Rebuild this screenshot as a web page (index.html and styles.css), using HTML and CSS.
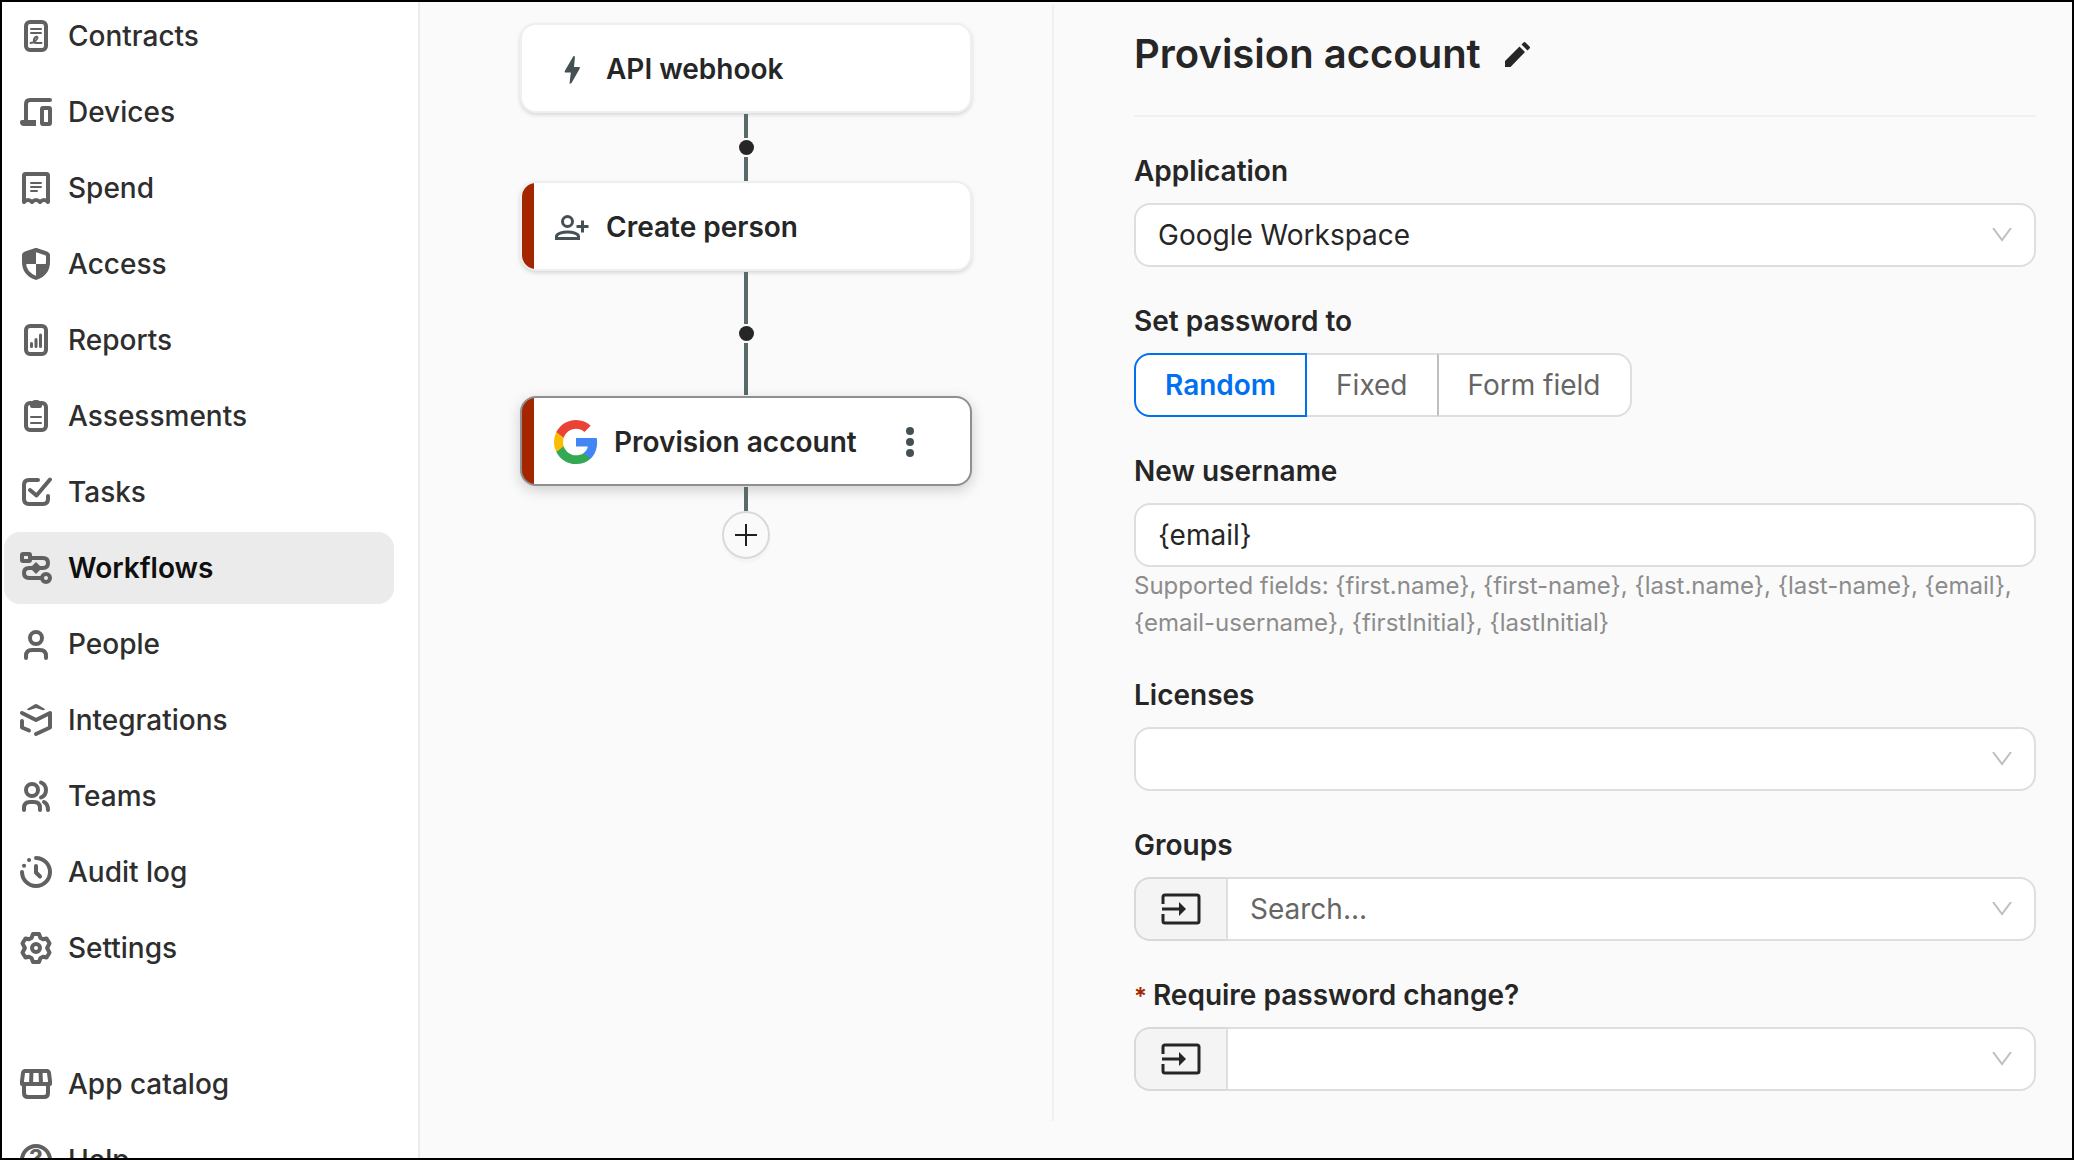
FILE: index.html
```
<!DOCTYPE html>
<html lang="en">
<head>
    <meta charset="UTF-8">
    <meta name="viewport" content="width=device-width, initial-scale=1.0">
    <title>Workflows</title>
    <link rel="stylesheet" href="styles.css">
</head>
<body>
    <div class="app">
        <nav class="sidebar">
            <a class="nav-item" href="#contracts">
                <svg class="nav-icon" viewBox="0 0 36 36"><rect x="8" y="4" width="20" height="28" rx="4"/><path stroke-width="2" d="M13 11h10M13 15h10M12.500 25c3 0 7.500-3.500 7-5.500-.5-1.500-3-.5-3.500 2s.5 3.500 2 3.500h5.500"/></svg>
                <span>Contracts</span>
            </a>
            <a class="nav-item" href="#devices">
                <svg class="nav-icon" viewBox="0 0 36 36"><path d="M32 6H12q-4 0-4 4v18"/><path fill="currentColor" stroke="none" d="M4 26h14v6H6q-4 0-4-4 0-2 2-2z"/><rect x="24" y="14" width="8" height="16" rx="1"/></svg>
                <span>Devices</span>
            </a>
            <a class="nav-item" href="#spend">
                <svg class="nav-icon" viewBox="0 0 36 36"><path d="M6 32V5.500Q6 4 7.500 4h21Q30 4 30 5.500V32q-2-2-4-2t-4 2q-2-2-4-2t-4 2q-2-2-4-2t-4 2z"/><path stroke-width="2" d="M13 13h10M13 17h10M13 21h6"/></svg>
                <span>Spend</span>
            </a>
            <a class="nav-item" href="#access">
                <svg class="nav-icon" viewBox="0 0 36 36"><path d="M18 4l9 3q3 1 3 2v7c0 8-4 13-12 16C10 29 6 24 6 16V9q0-1 3-2z"/><path fill="currentColor" stroke="none" d="M18 4v14H6V8zM18 18h12q-1 10-12 14z"/></svg>
                <span>Access</span>
            </a>
            <a class="nav-item" href="#reports">
                <svg class="nav-icon" viewBox="0 0 36 36"><rect x="8" y="4" width="20" height="28" rx="4"/><path stroke-width="3" d="M13.500 21.500v3M18 17.500v7M22.500 13v11.500"/></svg>
                <span>Reports</span>
            </a>
            <a class="nav-item" href="#assessments">
                <svg class="nav-icon" viewBox="0 0 36 36"><rect x="8" y="5" width="20" height="27" rx="4"/><path stroke-width="2" d="M13 19h10M13 25h10"/><path fill="currentColor" stroke="none" d="M12 5h2q0-3 3-3h2q3 0 3 3h2v3q0 2-2 2h-8q-2 0-2-2z"/></svg>
                <span>Assessments</span>
            </a>
            <a class="nav-item" href="#tasks">
                <svg class="nav-icon" viewBox="0 0 36 36"><path d="M20 6H11q-5 0-5 5v14q0 5 5 5h14q5 0 5-5v-3"/><path d="M12 16l6.500 5.500L32 5.500"/></svg>
                <span>Tasks</span>
            </a>
            <a class="nav-item active" href="#workflows">
                <svg class="nav-icon" viewBox="0 0 36 36"><rect x="4" y="4" width="8" height="7" rx="1"/><path d="M12 8h13q5 0 5 5t-5 5H11q-5 0-5 5t5 5h12"/><circle cx="28" cy="28" r="4"/><path fill="currentColor" stroke="none" d="M18 12l6 6-6 6-6-6z"/></svg>
                <span>Workflows</span>
            </a>
            <a class="nav-item" href="#people">
                <svg class="nav-icon" viewBox="0 0 36 36"><circle cx="18" cy="12" r="6"/><path d="M8 32v-2q0-6 6-6h8q6 0 6 6v2"/></svg>
                <span>People</span>
            </a>
            <a class="nav-item" href="#integrations">
                <svg class="nav-icon" viewBox="0 0 36 36"><path d="M4 11l14 7 14-7v14.500L18 32M4 19v6.500l7 3"/><path fill="currentColor" stroke="none" d="M9 7l7.500-4.500q1.500-1 3 0L27 7q0 1.500-3 1l-6-2-6 2q-3 .5-3-1z"/></svg>
                <span>Integrations</span>
            </a>
            <a class="nav-item" href="#teams">
                <svg class="nav-icon" viewBox="0 0 36 36"><circle cx="14" cy="12" r="6"/><path d="M6 32v-2q0-6 6-6h4q6 0 6 6v2M23 4.500q5 2 5 7.500t-5 7.500M26 24q4 2 4 8"/></svg>
                <span>Teams</span>
            </a>
            <a class="nav-item" href="#audit-log">
                <svg class="nav-icon" viewBox="0 0 36 36"><path d="M18 4a14 14 0 1 1-14 14M11 6h.1M6 11.800h.1M18 12v6.500l4 4"/></svg>
                <span>Audit log</span>
            </a>
            <a class="nav-item" href="#settings">
                <svg class="nav-icon" viewBox="0 0 36 36"><path d="M15 4h6l1.500 4 2.500 1.200 3.500-.7 3 4.800-2.400 4.700 2.400 4.700-3 4.800-3.500-.7-2.500 1.200-1.500 4h-6l-1.500-4L11 26.800l-3.500.7-3-4.800L6.900 18l-2.400-4.700 3-4.800 3.500.7L13.500 8z"/><circle cx="18" cy="18" r="4"/></svg>
                <span>Settings</span>
            </a>
            <div class="nav-bottom">
                <a class="nav-item" href="#app-catalog">
                    <svg class="nav-icon" viewBox="0 0 36 36"><path d="M7 5h22q1.500 0 2 2l1 8v3H4v-3l1-8q.5-2 2-2zM13.500 5l-.5 13M22.500 5l.5 13M6 18v9q0 4 4 4h16q4 0 4-4v-9"/></svg>
                    <span>App catalog</span>
                </a>
                <a class="nav-item" href="#help">
                    <svg class="nav-icon" viewBox="0 0 36 36"><circle cx="18" cy="18" r="14"/><text x="18" y="25" class="help-mark">?</text></svg>
                    <span>Help</span>
                </a>
            </div>
        </nav>

        <main class="canvas">
            <div class="step">
                <svg class="step-icon" viewBox="0 0 36 36"><path d="M19.500 5l1.500.500L20 16h5.500q.8.500 0 2L17.500 32l-2 1L16.800 21.500H11q-.8-.5 0-2z"/></svg>
                <span>API webhook</span>
            </div>
            <div class="connector">
                <span class="line"></span>
                <span class="dot"></span>
                <span class="line"></span>
            </div>
            <div class="step has-error">
                <svg class="step-icon outline" viewBox="0 0 36 36"><circle cx="13.500" cy="12.500" r="5"/><path d="M2.500 29.500v-2c0-3 6-4.500 11-4.500s11 1.500 11 4.500v2zM22.500 17.500h12M28.500 11.500v12"/></svg>
                <span>Create person</span>
            </div>
            <div class="connector long">
                <span class="line"></span>
                <span class="dot"></span>
                <span class="line"></span>
            </div>
            <div class="step has-error selected">
                <svg class="logo" viewBox="2 2 44 44">
                    <path fill="#4285f4" d="M45.120 24.500c0-1.560-.14-3.060-.4-4.500H24v8.510h11.840c-.51 2.750-2.060 5.080-4.390 6.640v5.520h7.110c4.160-3.830 6.560-9.470 6.560-16.170z"/>
                    <path fill="#34a853" d="M24 46c5.940 0 10.920-1.970 14.560-5.330l-7.110-5.520c-1.970 1.320-4.490 2.100-7.450 2.100-5.730 0-10.580-3.870-12.310-9.070H4.340v5.700C7.960 41.070 15.400 46 24 46z"/>
                    <path fill="#fbbc05" d="M11.690 28.180C11.250 26.860 11 25.450 11 24s.25-2.860.69-4.180v-5.700H4.340A21.990 21.990 0 0 0 2 24c0 3.550.85 6.910 2.340 9.880l7.350-5.700z"/>
                    <path fill="#ea4335" d="M24 10.750c3.230 0 6.130 1.110 8.410 3.290l6.310-6.310C34.910 4.180 29.930 2 24 2 15.400 2 7.960 6.930 4.340 14.120l7.350 5.700c1.730-5.200 6.580-9.070 12.310-9.070z"/>
                </svg>
                <span>Provision account</span>
                <button class="more" type="button" aria-label="More actions">
                    <svg width="8" height="30" viewBox="0 0 8 30"><circle cx="4" cy="4" r="4"/><circle cx="4" cy="15" r="4"/><circle cx="4" cy="26" r="4"/></svg>
                </button>
            </div>
            <div class="connector">
                <span class="line"></span>
            </div>
            <button class="add-step" type="button" aria-label="Add step">
                <svg width="22" height="22" viewBox="0 0 22 22"><path d="M11 0v22M0 11h22"/></svg>
            </button>
        </main>

        <section class="panel">
            <header class="panel-header">
                <h1>Provision account</h1>
                <button class="edit" type="button" aria-label="Rename">
                    <svg width="25" height="25" viewBox="0 0 25 25"><path d="M0 25v-6L14.500 4.500l5.500 5.500L5.500 25zM16.500 2.500L18.500.5q1-1 2 0l4 4q1 1 0 2l-2 2z"/></svg>
                </button>
            </header>

            <form class="panel-form">
                <div class="form-group">
                    <label for="application">Application</label>
                    <div class="select">
                        <select id="application">
                            <option>Google Workspace</option>
                        </select>
                        <svg class="chevron" viewBox="0 0 20 14"><path d="M1 0l9 12 9-12"/></svg>
                    </div>
                </div>

                <fieldset class="form-group">
                    <legend>Set password to</legend>
                    <div class="radio-group">
                        <input type="radio" name="password" id="random" checked>
                        <label for="random">Random</label>
                        <input type="radio" name="password" id="fixed">
                        <label for="fixed">Fixed</label>
                        <input type="radio" name="password" id="form-field">
                        <label for="form-field">Form field</label>
                    </div>
                </fieldset>

                <div class="form-group">
                    <label for="username">New username</label>
                    <input class="text-input" type="text" id="username" value="{email}">
                    <p class="hint">Supported fields: {first.name}, {first-name}, {last.name}, {last-name}, {email}, {email-username}, {firstInitial}, {lastInitial}</p>
                </div>

                <div class="form-group">
                    <label for="licenses">Licenses</label>
                    <div class="select">
                        <select id="licenses">
                            <option></option>
                        </select>
                        <svg class="chevron" viewBox="0 0 20 14"><path d="M1 0l9 12 9-12"/></svg>
                    </div>
                </div>

                <div class="form-group">
                    <label for="groups">Groups</label>
                    <div class="select with-addon">
                        <button class="addon" type="button" aria-label="Use a field for groups">
                            <svg width="40" height="32" viewBox="0 0 40 32"><path class="frame" d="M2 11V4q0-2 2-2h32q2 0 2 2v24q0 2-2 2H4q-2 0-2-2v-7M1 16h18"/><path d="M18 9l7 7-7 7z"/></svg>
                        </button>
                        <select id="groups" class="placeholder">
                            <option>Search...</option>
                        </select>
                        <svg class="chevron" viewBox="0 0 20 14"><path d="M1 0l9 12 9-12"/></svg>
                    </div>
                </div>

                <div class="form-group">
                    <label for="require-change"><span class="required">*</span>Require password change?</label>
                    <div class="select with-addon">
                        <button class="addon" type="button" aria-label="Use a field for password change">
                            <svg width="40" height="32" viewBox="0 0 40 32"><path class="frame" d="M2 11V4q0-2 2-2h32q2 0 2 2v24q0 2-2 2H4q-2 0-2-2v-7M1 16h18"/><path d="M18 9l7 7-7 7z"/></svg>
                        </button>
                        <select id="require-change">
                            <option></option>
                        </select>
                        <svg class="chevron" viewBox="0 0 20 14"><path d="M1 0l9 12 9-12"/></svg>
                    </div>
                </div>
            </form>
        </section>
    </div>
</body>
</html>
```
FILE: styles.css
```
* {
    box-sizing: border-box;
}

body {
    margin: 0;
    font-family: Inter, "Liberation Sans", sans-serif;
    font-size: 28px;
    line-height: 44px;
    color: #262626;
    background-color: #fafafa;
}

button,
input,
select {
    font: inherit;
    color: inherit;
}

button {
    padding: 0;
    border: none;
    background: none;
    cursor: pointer;
}

.app {
    display: grid;
    grid-template-columns: 420px 632px 1fr;
    height: 100vh;
    overflow: hidden;
    outline: 2px solid #000;
    outline-offset: -2px;
}

/* Sidebar */
.sidebar {
    display: flex;
    flex-direction: column;
    gap: 4px;
    padding: 0 24px 0 4px;
    background-color: #fff;
    border-right: 2px solid #ebebeb;
}

.nav-item {
    display: flex;
    flex-shrink: 0;
    align-items: center;
    gap: 14px;
    height: 72px;
    padding: 0 14px;
    border-radius: 16px;
    color: #2e2e2e;
    font-weight: 500;
    text-decoration: none;
}

.nav-item.active {
    background-color: #ebebeb;
    color: #0f0f0f;
    font-weight: 600;
}

.nav-icon {
    width: 36px;
    height: 36px;
    color: #616161;
    fill: none;
    stroke: currentColor;
    stroke-width: 4;
    stroke-linecap: round;
    stroke-linejoin: round;
}

.help-mark {
    fill: currentColor;
    stroke: none;
    font-size: 24px;
    font-weight: 700;
    text-anchor: middle;
}

.nav-bottom {
    display: flex;
    flex-direction: column;
    gap: 4px;
    padding-top: 60px;
}

/* Workflow steps */
.canvas {
    display: flex;
    flex-direction: column;
    align-items: center;
    padding: 23px 0 0 20px;
}

.step {
    display: flex;
    flex-shrink: 0;
    align-items: center;
    gap: 16px;
    width: 452px;
    height: 90px;
    padding: 2px 32px 0;
    background-color: #fff;
    border: 2px solid #efefef;
    border-radius: 16px;
    box-shadow: 0 2px 4px rgba(0, 0, 0, 0.14);
    font-weight: 600;
}

.step.has-error {
    background-image: linear-gradient(#a32600, #a32600);
    background-repeat: no-repeat;
    background-size: 12px 100%;
}

.step.selected {
    border-color: #8f8f8f;
    box-shadow: 0 4px 14px rgba(0, 0, 0, 0.18);
}

.step-icon {
    width: 36px;
    height: 36px;
    fill: #455054;
}

.step-icon.outline {
    fill: none;
    stroke: #455054;
    stroke-width: 3;
}

.logo {
    width: 44px;
    height: 44px;
}

.more {
    display: flex;
    justify-content: center;
    width: 40px;
    margin-left: auto;
    margin-right: 8px;
    fill: #455054;
}

.connector {
    display: flex;
    flex-direction: column;
    align-items: center;
    padding-top: 1px;
}

.connector.long {
    padding-bottom: 1px;
}

.line {
    width: 4px;
    height: 24px;
    background-color: #596a6a;
}

.connector.long .line {
    height: 52px;
}

.dot {
    width: 15px;
    height: 15px;
    margin: 2px;
    border-radius: 50%;
    background-color: #262626;
}

.add-step {
    display: flex;
    flex-shrink: 0;
    align-items: center;
    justify-content: center;
    width: 48px;
    height: 48px;
    border: 2px solid #d9d9d9;
    border-radius: 50%;
    box-shadow: 0 4px 0 rgba(0, 0, 0, 0.02);
}

.add-step svg {
    stroke: #1f1f1f;
    stroke-width: 2;
}

/* Details panel */
.panel {
    align-self: start;
    margin-top: 5px;
    padding: 0 38px 30px 80px;
    border-left: 2px solid #f0f0f0;
}

.panel-header {
    display: flex;
    align-items: center;
    gap: 24px;
    padding: 25px 0 37px;
    border-bottom: 2px solid #f0f0f0;
}

h1 {
    margin: 0;
    font-size: 40px;
    line-height: 48px;
    font-weight: 600;
}

.edit {
    display: flex;
    fill: #262626;
}

.panel-form {
    display: flex;
    flex-direction: column;
    gap: 32px;
    padding-top: 32px;
}

.form-group {
    min-width: 0;
    margin: 0;
    padding: 0;
    border: none;
}

.form-group > label,
legend {
    display: block;
    padding: 0 0 10px;
    font-weight: 600;
}

.required {
    margin-right: 6px;
    color: #a32600;
    font-size: 24px;
    line-height: 1;
}

.select {
    display: flex;
    position: relative;
}

select,
.text-input {
    flex: 1;
    width: 100%;
    height: 64px;
    padding: 0 22px;
    border: 2px solid #dedede;
    border-radius: 16px;
    background-color: #fff;
    appearance: none;
}

.text-input {
    display: block;
}

.placeholder {
    color: #666;
}

.chevron {
    position: absolute;
    top: 25px;
    right: 24px;
    width: 20px;
    height: 14px;
    fill: none;
    stroke: #bfbfbf;
    stroke-width: 2;
    pointer-events: none;
}

.addon {
    display: flex;
    align-items: center;
    justify-content: center;
    width: 92px;
    border: 2px solid #d9d9d9;
    border-right: none;
    border-radius: 16px 0 0 16px;
    background-color: #f4f4f4;
    fill: #262626;
}

.addon .frame {
    fill: none;
    stroke: #262626;
    stroke-width: 3;
}

.with-addon select {
    border-radius: 0 16px 16px 0;
}

.radio-group {
    display: flex;
}

.radio-group input {
    position: absolute;
    opacity: 0;
    pointer-events: none;
}

.radio-group label {
    height: 64px;
    padding: 0 29px;
    border: 2px solid #dedede;
    border-left: none;
    background-color: #fff;
    color: #666;
    line-height: 60px;
    cursor: pointer;
}

.radio-group label:first-of-type {
    border-left: 2px solid #dedede;
    border-radius: 16px 0 0 16px;
}

.radio-group label:last-of-type {
    border-left: 2px solid #bfbfbf;
    border-radius: 0 16px 16px 0;
}

.radio-group label:nth-of-type(2) {
    border-right: none;
}

.radio-group input:checked + label {
    border-color: #0070f0;
    color: #0070f0;
    font-weight: 600;
}

.hint {
    margin: 0;
    color: #8c8c8c;
    font-size: 24px;
    line-height: 37px;
}
```
